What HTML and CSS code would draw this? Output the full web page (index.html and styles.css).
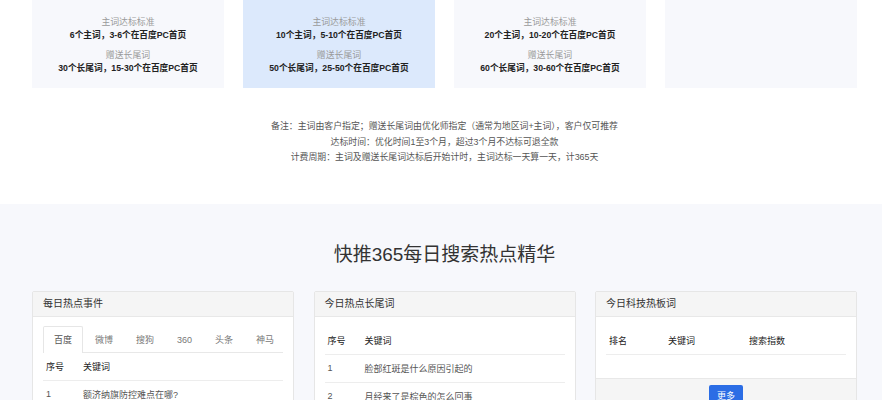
FILE: index.html
```html
<!DOCTYPE html>
<html lang="zh-CN">
<head>
<meta charset="utf-8">
<title>快推365</title>
<link rel="stylesheet" href="styles.css">
</head>
<body>
<section class="plans">
  <div class="plan-grid">
    <div class="plan">
      <div class="plan-label">主词达标标准</div>
      <div class="plan-value">6个主词，3-6个在百度PC首页</div>
      <div class="plan-label second">赠送长尾词</div>
      <div class="plan-value">30个长尾词，15-30个在百度PC首页</div>
    </div>
    <div class="plan plan-active">
      <div class="plan-label">主词达标标准</div>
      <div class="plan-value">10个主词，5-10个在百度PC首页</div>
      <div class="plan-label second">赠送长尾词</div>
      <div class="plan-value">50个长尾词，25-50个在百度PC首页</div>
    </div>
    <div class="plan">
      <div class="plan-label">主词达标标准</div>
      <div class="plan-value">20个主词，10-20个在百度PC首页</div>
      <div class="plan-label second">赠送长尾词</div>
      <div class="plan-value">60个长尾词，30-60个在百度PC首页</div>
    </div>
    <div class="plan"></div>
  </div>
  <div class="notes">
    <p>备注：主词由客户指定；赠送长尾词由优化师指定（通常为地区词+主词），客户仅可推荐</p>
    <p>达标时间：优化时间1至3个月，超过3个月不达标可退全款</p>
    <p>计费周期：主词及赠送长尾词达标后开始计时，主词达标一天算一天，计365天</p>
  </div>
</section>

<section class="hot">
  <h2 class="hot-title">快推365每日搜索热点精华</h2>
  <div class="panel-grid">
    <div class="panel">
      <div class="panel-head">每日热点事件</div>
      <div class="panel-body">
        <ul class="tabs">
          <li class="tab tab-active">百度</li>
          <li class="tab">微博</li>
          <li class="tab">搜狗</li>
          <li class="tab">360</li>
          <li class="tab">头条</li>
          <li class="tab">神马</li>
        </ul>
        <table class="tbl">
          <thead><tr><th class="c-no">序号</th><th>关键词</th></tr></thead>
          <tbody>
            <tr><td class="c-no">1</td><td>额济纳旗防控难点在哪?</td></tr>
          </tbody>
        </table>
      </div>
    </div>
    <div class="panel">
      <div class="panel-head">今日热点长尾词</div>
      <div class="panel-body pad-top">
        <table class="tbl">
          <thead><tr><th class="c-no">序号</th><th>关键词</th></tr></thead>
          <tbody>
            <tr><td class="c-no">1</td><td>脸部红斑是什么原因引起的</td></tr>
            <tr><td class="c-no">2</td><td>月经来了是棕色的怎么回事</td></tr>
          </tbody>
        </table>
      </div>
    </div>
    <div class="panel">
      <div class="panel-head">今日科技热板词</div>
      <div class="panel-body pad-top pad-bottom">
        <table class="tbl">
          <thead><tr><th class="c-rank">排名</th><th class="c-kw">关键词</th><th>搜索指数</th></tr></thead>
          <tbody></tbody>
        </table>
      </div>
      <div class="panel-foot"><button class="more">更多</button></div>
    </div>
  </div>
</section>
</body>
</html>
```
FILE: styles.css
```css
* { box-sizing: border-box; }
html, body { margin: 0; padding: 0; }
body {
  font-family: "Liberation Sans", "Noto Sans CJK SC", sans-serif;
  color: #333;
  background: #fff;
}
.plans { padding: 0 25px 0 32px; background: #fff; height: 204px; }
.plan-grid {
  display: grid;
  grid-template-columns: repeat(4, 192px);
  column-gap: 19px;
}
.plan {
  height: 88px;
  background: #f7f8fc;
  text-align: center;
  padding-top: 16px;
}
.plan-active { background: #dce9fc; }
.plan-label { font-size: 8.9px; line-height: 13px; color: #9a9a9a; }
.plan-label.second { margin-top: 6.5px; }
.plan-value { font-size: 8.7px; line-height: 13px; color: #222; font-weight: bold; }
.notes { margin-top: 31px; text-align: center; }
.notes p { margin: 0; font-size: 8.9px; line-height: 15.5px; color: #555; }

.hot { background: #f7f8fc; padding: 38px 25px 40px 32px; }
.hot-title {
  margin: 0 0 23px;
  text-align: center;
  font-size: 19px;
  line-height: 26px;
  font-weight: normal;
  color: #333;
}
.panel-grid {
  display: grid;
  grid-template-columns: repeat(3, 262px);
  column-gap: 19.5px;
  align-items: start;
}
.panel { background: #fff; border: 1px solid #e6e6e6; border-radius: 2px; overflow: hidden; }
.panel-head {
  height: 25px;
  line-height: 24px;
  padding-left: 10px;
  background: #f5f5f5;
  border-bottom: 1px solid #e8e8e8;
  font-size: 10px;
  color: #333;
}
.panel-body { padding: 9px 10px 10px; }
.panel-body.pad-top { padding-top: 10px; }
.panel-body.pad-bottom { padding-bottom: 23px; }
.tabs {
  list-style: none;
  margin: 0;
  padding: 0;
  display: flex;
  height: 27px;
  border-bottom: 1px solid #e8e8e8;
}
.tab {
  flex: 0 0 auto;
  white-space: nowrap;
  padding: 0 10px;
  margin-right: 1px;
  line-height: 26px;
  font-size: 9px;
  color: #777;
  border: 1px solid transparent;
  border-bottom: none;
  border-radius: 2px 2px 0 0;
}
.tab-active { border-color: #e6e6e6; background: #fff; color: #555; height: 27px; }
.tbl { width: 100%; border-collapse: collapse; font-size: 9px; }
.tbl th {
  text-align: left;
  font-weight: normal;
  color: #222;
  height: 27px;
  padding: 0 3px;
  border-bottom: 1px solid #ededed;
  white-space: nowrap;
}
.tbl td {
  height: 28px;
  padding: 0 3px;
  color: #555;
  border-bottom: 1px solid #ededed;
  white-space: nowrap;
}
.c-no { width: 37px; }
.c-rank { width: 59px; }
.c-kw { width: 81px; }
.panel-foot {
  background: #f5f5f5;
  border-top: 1px solid #e8e8e8;
  padding: 6px 0 8px;
  text-align: center;
}
.more {
  border: none;
  border-radius: 2px;
  background: #2b6de5;
  color: #fff;
  font-family: inherit;
  font-size: 9px;
  width: 34px;
  height: 22px;
  padding: 0;
}
```
